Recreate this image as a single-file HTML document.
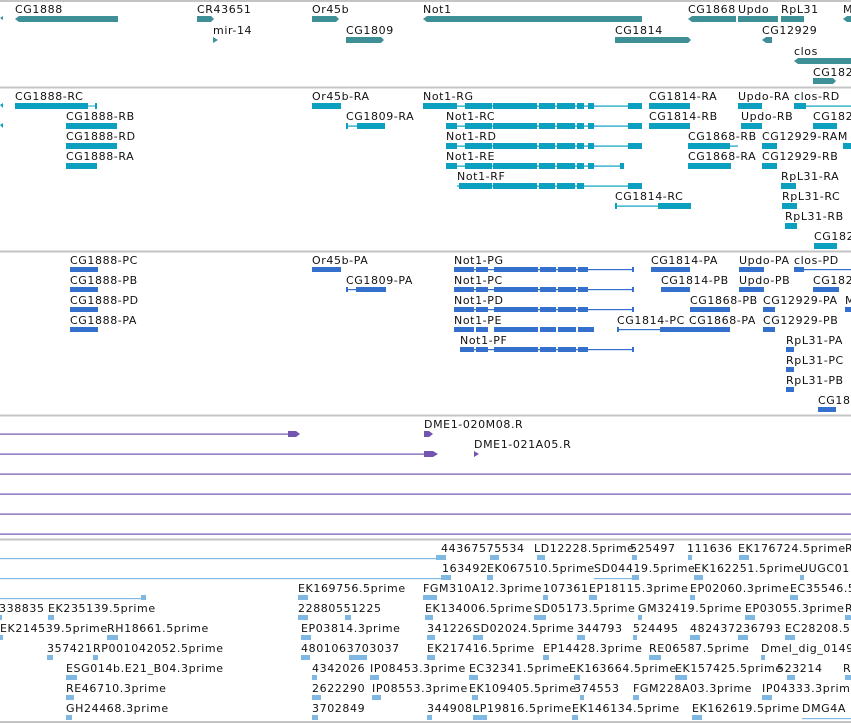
<!DOCTYPE html>
<html><head><meta charset="utf-8"><style>
html,body{margin:0;padding:0;background:#fff;width:851px;height:723px;overflow:hidden}
svg{display:block}
text{font-family:"DejaVu Sans","Liberation Sans",sans-serif;font-size:11px;letter-spacing:0.6px;fill:#111}
</style></head><body>
<svg width="851" height="723" viewBox="0 0 851 723" xmlns="http://www.w3.org/2000/svg">
<g stroke="#c4c4c4" stroke-width="2">
<line x1="0" y1="1" x2="851" y2="1"/><line x1="0" y1="87.5" x2="851" y2="87.5"/>
<line x1="0" y1="251.5" x2="851" y2="251.5"/><line x1="0" y1="415.5" x2="851" y2="415.5"/>
<line x1="0" y1="539.5" x2="851" y2="539.5"/><line x1="0" y1="722" x2="851" y2="722"/>
</g>

<!-- Track 1 genes -->
<g fill="#3f9096">
<polygon points="0,18 3,16 3,20"/>
<polygon points="15,19 19,16 118,16 118,22 19,22"/>
<polygon points="197,16 211,16 214,19 211,22 197,22"/>
<polygon points="312,16 336,16 339,19 336,22 312,22"/>
<polygon points="423,19 427,16 642,16 642,22 427,22"/>
<polygon points="688,19 692,16 736,16 736,22 692,22"/>
<rect x="738" y="16" width="40" height="6"/>
<rect x="781" y="16" width="23" height="6"/>
<polygon points="843,19 847,16 851,16 851,22 847,22"/>
<polygon points="213,37 218,40 213,43"/>
<polygon points="346,37 381,37 384,40 381,43 346,43"/>
<polygon points="615,37 688,37 691,40 688,43 615,43"/>
<polygon points="762,40 766,37 772,37 772,43 766,43"/>
<polygon points="794,61 798,58 851,58 851,64 798,64"/>
<polygon points="813,78 833,78 836,81 833,84 813,84"/>
</g>
<text x="15" y="13">CG1888</text><text x="197" y="13">CR43651</text><text x="312" y="13">Or45b</text>
<text x="423" y="13">Not1</text><text x="688" y="13">CG1868</text><text x="738" y="13">Updo</text>
<text x="781" y="13">RpL31</text><text x="843" y="13">M</text>
<text x="213" y="34">mir-14</text><text x="346" y="34">CG1809</text><text x="615" y="34">CG1814</text><text x="762" y="34">CG12929</text>
<text x="794" y="55">clos</text><text x="813" y="76">CG182</text>

<!-- Track 2 transcripts -->
<g fill="#0ba0c0">
<polygon points="0,105 3,103 3,108"/><polygon points="0,125 3,123 3,128"/>
<rect x="15" y="103" width="73" height="6"/><rect x="87" y="105.5" width="10" height="1"/><rect x="95" y="103" width="2" height="6"/>
<rect x="312" y="103" width="29" height="6"/>
<rect x="423" y="105.5" width="219" height="1.2"/>
<rect x="423" y="103" width="34" height="6"/><rect x="465" y="103" width="27" height="6"/><rect x="493" y="103" width="44" height="6"/><rect x="539" y="103" width="16" height="6"/><rect x="557" y="103" width="18" height="6"/><rect x="577" y="103" width="7" height="6"/><rect x="588" y="103" width="6" height="6"/><rect x="628" y="103" width="14" height="6"/>
<rect x="649" y="103" width="41" height="6"/>
<rect x="738" y="103" width="24" height="6"/>
<rect x="794" y="105.5" width="57" height="1.2"/><rect x="794" y="103" width="12" height="6"/>

<rect x="66" y="123" width="51" height="6"/>
<rect x="346" y="125.5" width="39" height="1.2"/><rect x="346" y="123" width="2" height="6"/><rect x="357" y="123" width="28" height="6"/>
<rect x="446" y="125.5" width="196" height="1.2"/>
<rect x="446" y="123" width="11" height="6"/><rect x="465" y="123" width="27" height="6"/><rect x="493" y="123" width="44" height="6"/><rect x="539" y="123" width="16" height="6"/><rect x="557" y="123" width="18" height="6"/><rect x="577" y="123" width="7" height="6"/><rect x="588" y="123" width="6" height="6"/><rect x="628" y="123" width="14" height="6"/>
<rect x="649" y="123" width="41" height="6"/>
<rect x="741" y="123" width="21" height="6"/>
<rect x="813" y="123" width="24" height="6"/>

<rect x="66" y="143" width="51" height="6"/>
<rect x="446" y="145.5" width="196" height="1.2"/>
<rect x="446" y="143" width="11" height="6"/><rect x="465" y="143" width="27" height="6"/><rect x="493" y="143" width="44" height="6"/><rect x="539" y="143" width="16" height="6"/><rect x="557" y="143" width="18" height="6"/><rect x="577" y="143" width="7" height="6"/><rect x="588" y="143" width="6" height="6"/><rect x="628" y="143" width="14" height="6"/>
<rect x="688" y="145.5" width="50" height="1.2"/><rect x="688" y="143" width="42" height="6"/>
<rect x="762" y="143" width="15" height="6"/><rect x="843" y="143" width="8" height="6"/>

<rect x="66" y="163" width="31" height="6"/>
<rect x="446" y="165.5" width="178" height="1.2"/>
<rect x="446" y="163" width="11" height="6"/><rect x="465" y="163" width="27" height="6"/><rect x="493" y="163" width="44" height="6"/><rect x="539" y="163" width="16" height="6"/><rect x="557" y="163" width="18" height="6"/><rect x="577" y="163" width="7" height="6"/><rect x="588" y="163" width="6" height="6"/><rect x="620" y="163" width="4" height="6"/>
<rect x="688" y="163" width="43" height="6"/>
<rect x="762" y="163" width="15" height="6"/>

<rect x="457" y="185.5" width="185" height="1.2"/>
<rect x="459" y="183" width="33" height="6"/><rect x="493" y="183" width="44" height="6"/><rect x="539" y="183" width="16" height="6"/><rect x="557" y="183" width="18" height="6"/><rect x="577" y="183" width="7" height="6"/><rect x="628" y="183" width="14" height="6"/>
<rect x="781" y="183" width="15" height="6"/>
<rect x="615" y="205.5" width="76" height="1.2"/><rect x="615" y="203" width="2" height="6"/><rect x="658" y="203" width="33" height="6"/>
<rect x="782" y="203" width="15" height="6"/>
<rect x="785" y="223" width="12" height="6"/>
<rect x="814" y="243" width="23" height="6"/>
</g>
<text x="15" y="100">CG1888-RC</text><text x="312" y="100">Or45b-RA</text><text x="423" y="100">Not1-RG</text><text x="649" y="100">CG1814-RA</text><text x="738" y="100">Updo-RA</text><text x="794" y="100">clos-RD</text>
<text x="66" y="120">CG1888-RB</text><text x="346" y="120">CG1809-RA</text><text x="446" y="120">Not1-RC</text><text x="649" y="120">CG1814-RB</text><text x="741" y="120">Updo-RB</text><text x="813" y="120">CG182</text>
<text x="66" y="140">CG1888-RD</text><text x="446" y="140">Not1-RD</text><text x="688" y="140">CG1868-RB</text><text x="762" y="140">CG12929-RAM</text>
<text x="66" y="160">CG1888-RA</text><text x="446" y="160">Not1-RE</text><text x="688" y="160">CG1868-RA</text><text x="762" y="160">CG12929-RB</text>
<text x="457" y="180">Not1-RF</text><text x="781" y="180">RpL31-RA</text>
<text x="615" y="200">CG1814-RC</text><text x="782" y="200">RpL31-RC</text>
<text x="785" y="220">RpL31-RB</text>
<text x="814" y="240">CG182</text>

<!-- Track 3 proteins -->
<g fill="#3470cc">
<rect x="70" y="267" width="28" height="5"/><rect x="312" y="267" width="29" height="5"/>
<rect x="454" y="269" width="180" height="1.2"/><rect x="454" y="267" width="20" height="5"/><rect x="476" y="267" width="12" height="5"/><rect x="494" y="267" width="44" height="5"/><rect x="540" y="267" width="16" height="5"/><rect x="558" y="267" width="18" height="5"/><rect x="578" y="267" width="10" height="5"/><rect x="632" y="267" width="2" height="5"/>
<rect x="651" y="267" width="39" height="5"/><rect x="739" y="267" width="25" height="5"/>
<rect x="794" y="269" width="57" height="1.2"/><rect x="794" y="267" width="10" height="5"/>

<rect x="70" y="287" width="28" height="5"/>
<rect x="346" y="289" width="40" height="1.2"/><rect x="346" y="287" width="2" height="5"/><rect x="356" y="287" width="30" height="5"/>
<rect x="454" y="289" width="180" height="1.2"/><rect x="454" y="287" width="20" height="5"/><rect x="476" y="287" width="12" height="5"/><rect x="494" y="287" width="44" height="5"/><rect x="540" y="287" width="16" height="5"/><rect x="558" y="287" width="18" height="5"/><rect x="578" y="287" width="10" height="5"/><rect x="632" y="287" width="2" height="5"/>
<rect x="661" y="287" width="29" height="5"/><rect x="739" y="287" width="25" height="5"/><rect x="813" y="287" width="26" height="5"/>

<rect x="70" y="307" width="28" height="5"/>
<rect x="454" y="309" width="180" height="1.2"/><rect x="454" y="307" width="20" height="5"/><rect x="476" y="307" width="12" height="5"/><rect x="494" y="307" width="44" height="5"/><rect x="540" y="307" width="16" height="5"/><rect x="558" y="307" width="18" height="5"/><rect x="578" y="307" width="10" height="5"/><rect x="632" y="307" width="2" height="5"/>
<rect x="690" y="307" width="40" height="5"/><rect x="763" y="307" width="12" height="5"/><rect x="845" y="307" width="6" height="5"/>

<rect x="70" y="327" width="28" height="5"/>
<rect x="454" y="327" width="20" height="5"/><rect x="476" y="327" width="12" height="5"/><rect x="494" y="327" width="44" height="5"/><rect x="540" y="327" width="16" height="5"/><rect x="558" y="327" width="18" height="5"/><rect x="578" y="327" width="16" height="5"/>
<rect x="617" y="329" width="73" height="1.2"/><rect x="617" y="327" width="2" height="5"/><rect x="660" y="327" width="70" height="5"/>
<rect x="763" y="327" width="12" height="5"/>

<rect x="460" y="349" width="174" height="1.2"/><rect x="460" y="347" width="14" height="5"/><rect x="476" y="347" width="12" height="5"/><rect x="494" y="347" width="44" height="5"/><rect x="540" y="347" width="16" height="5"/><rect x="558" y="347" width="18" height="5"/><rect x="578" y="347" width="10" height="5"/><rect x="632" y="347" width="2" height="5"/>
<rect x="786" y="347" width="8" height="5"/>
<rect x="786" y="367" width="8" height="5"/>
<rect x="786" y="387" width="8" height="5"/>
<rect x="818" y="407" width="18" height="5"/>
</g>
<text x="70" y="264">CG1888-PC</text><text x="312" y="264">Or45b-PA</text><text x="454" y="264">Not1-PG</text><text x="651" y="264">CG1814-PA</text><text x="739" y="264">Updo-PA</text><text x="794" y="264">clos-PD</text>
<text x="70" y="284">CG1888-PB</text><text x="346" y="284">CG1809-PA</text><text x="454" y="284">Not1-PC</text><text x="661" y="284">CG1814-PB</text><text x="739" y="284">Updo-PB</text><text x="813" y="284">CG182</text>
<text x="70" y="304">CG1888-PD</text><text x="454" y="304">Not1-PD</text><text x="690" y="304">CG1868-PB</text><text x="763" y="304">CG12929-PA</text><text x="845" y="304">M</text>
<text x="70" y="324">CG1888-PA</text><text x="454" y="324">Not1-PE</text><text x="617" y="324">CG1814-PC</text><text x="689" y="324">CG1868-PA</text><text x="763" y="324">CG12929-PB</text>
<text x="460" y="344">Not1-PF</text><text x="786" y="344">RpL31-PA</text>
<text x="786" y="364">RpL31-PC</text><text x="786" y="384">RpL31-PB</text><text x="818" y="404">CG18</text>

<!-- Track 4 -->
<g fill="#7354b0" stroke="none">
<rect x="0" y="433.5" width="290" height="1.2"/><polygon points="288,431 296,431 300,434 296,437 288,437"/>
<polygon points="424,431 429,431 433,434 429,437 424,437"/>
<rect x="0" y="453.5" width="426" height="1.2"/><polygon points="424,451 433,451 438,454 433,457 424,457"/>
<polygon points="474,451 479,454 474,457"/>
<rect x="0" y="473.5" width="851" height="1.2"/><rect x="0" y="493.5" width="851" height="1.2"/>
<rect x="0" y="513.5" width="851" height="1.2"/><rect x="0" y="533.5" width="851" height="1.2"/>
</g>
<text x="424" y="428">DME1-020M08.R</text><text x="474" y="448">DME1-021A05.R</text>

<!-- Track 5 -->
<g fill="#7fb8e2">
<rect x="0" y="558" width="436" height="1.2"/><rect x="436" y="555" width="10" height="5"/>
<rect x="0" y="578" width="441" height="1.2"/><rect x="441" y="575" width="10" height="5"/>
<rect x="0" y="598" width="146" height="1.2"/><rect x="141" y="595" width="5" height="5"/>
<rect x="490" y="555" width="9" height="5"/><rect x="537" y="555" width="8" height="5"/><rect x="632" y="555" width="5" height="5"/><rect x="688" y="555" width="4" height="5"/><rect x="739" y="555" width="10" height="5"/>
<rect x="487" y="575" width="6" height="5"/><rect x="594" y="578" width="45" height="1.2"/><rect x="632" y="575" width="7" height="5"/><rect x="694" y="575" width="9" height="5"/><rect x="800" y="575" width="4" height="5"/>
<rect x="298" y="595" width="10" height="5"/><rect x="423" y="595" width="14" height="5"/><rect x="543" y="595" width="5" height="5"/><rect x="589" y="595" width="8" height="5"/><rect x="690" y="595" width="5" height="5"/><rect x="790" y="595" width="8" height="5"/>
<rect x="0" y="615" width="2" height="5"/><rect x="48" y="615" width="6" height="5"/><rect x="298" y="615" width="10" height="5"/><rect x="345" y="615" width="6" height="5"/><rect x="425" y="615" width="8" height="5"/><rect x="534" y="615" width="12" height="5"/><rect x="638" y="615" width="4" height="5"/><rect x="745" y="615" width="10" height="5"/><rect x="845" y="615" width="6" height="5"/>
<rect x="0" y="635" width="3" height="5"/><rect x="107" y="635" width="11" height="5"/><rect x="301" y="635" width="10" height="5"/><rect x="427" y="635" width="8" height="5"/><rect x="473" y="635" width="10" height="5"/><rect x="577" y="635" width="8" height="5"/><rect x="633" y="635" width="4" height="5"/><rect x="690" y="635" width="10" height="5"/><rect x="738" y="635" width="10" height="5"/><rect x="785" y="635" width="10" height="5"/>
<rect x="47" y="655" width="6" height="5"/><rect x="93" y="655" width="5" height="5"/><rect x="301" y="655" width="9" height="5"/><rect x="349" y="655" width="18" height="5"/><rect x="427" y="655" width="8" height="5"/><rect x="543" y="655" width="6" height="5"/><rect x="649" y="655" width="12" height="5"/><rect x="761" y="655" width="4" height="5"/>
<rect x="66" y="675" width="11" height="5"/><rect x="312" y="675" width="5" height="5"/><rect x="370" y="675" width="9" height="5"/><rect x="469" y="675" width="9" height="5"/><rect x="574" y="675" width="6" height="5"/><rect x="675" y="675" width="12" height="5"/><rect x="787" y="675" width="8" height="5"/><rect x="845" y="675" width="6" height="5"/>
<rect x="66" y="695" width="8" height="5"/><rect x="312" y="695" width="9" height="5"/><rect x="372" y="695" width="9" height="5"/><rect x="472" y="695" width="6" height="5"/><rect x="580" y="695" width="4" height="5"/><rect x="633" y="695" width="6" height="5"/><rect x="762" y="695" width="10" height="5"/>
<rect x="66" y="715" width="6" height="5"/><rect x="312" y="715" width="6" height="5"/><rect x="427" y="715" width="5" height="5"/><rect x="473" y="715" width="14" height="5"/><rect x="572" y="715" width="6" height="5"/><rect x="692" y="715" width="10" height="5"/><rect x="802" y="718" width="49" height="1.2"/>
</g>
<text x="441" y="552">44367575534</text><text x="534" y="552">LD12228.5prime</text><text x="630" y="552">525497</text><text x="687" y="552">111636</text><text x="738" y="552">EK176724.5prime</text><text x="845" y="552">R</text>
<text x="442" y="572">163492</text><text x="487" y="572">EK067510.5prime</text><text x="594" y="572">SD04419.5prime</text><text x="694" y="572">EK162251.5prime</text><text x="800" y="572">UUGC01</text>
<text x="298" y="592">EK169756.5prime</text><text x="423" y="592">FGM310A12.3prime</text><text x="543" y="592">107361</text><text x="589" y="592">EP18115.3prime</text><text x="690" y="592">EP02060.3prime</text><text x="790" y="592">EC35546.5</text>
<text x="-1" y="612">338835</text><text x="48" y="612">EK235139.5prime</text><text x="298" y="612">22880551225</text><text x="425" y="612">EK134006.5prime</text><text x="534" y="612">SD05173.5prime</text><text x="638" y="612">GM32419.5prime</text><text x="745" y="612">EP03055.3prime</text><text x="845" y="612">R</text>
<text x="0" y="632">EK214539.5prime</text><text x="107" y="632">RH18661.5prime</text><text x="301" y="632">EP03814.3prime</text><text x="427" y="632">341226</text><text x="473" y="632">SD02024.5prime</text><text x="577" y="632">344793</text><text x="633" y="632">524495</text><text x="690" y="632">482437236793</text><text x="785" y="632">EC28208.5</text>
<text x="47" y="652">357421</text><text x="93" y="652">RP001042052.5prime</text><text x="301" y="652">4801063703037</text><text x="427" y="652">EK217416.5prime</text><text x="543" y="652">EP14428.3prime</text><text x="649" y="652">RE06587.5prime</text><text x="761" y="652">Dmel_dig_0149</text>
<text x="66" y="672">ESG014b.E21_B04.3prime</text><text x="312" y="672">4342026</text><text x="370" y="672">IP08453.3prime</text><text x="469" y="672">EC32341.5prime</text><text x="569" y="672">EK163664.5prime</text><text x="675" y="672">EK157425.5prime</text><text x="777" y="672">523214</text><text x="843" y="672">R</text>
<text x="66" y="692">RE46710.3prime</text><text x="312" y="692">2622290</text><text x="372" y="692">IP08553.3prime</text><text x="469" y="692">EK109405.5prime</text><text x="574" y="692">374553</text><text x="633" y="692">FGM228A03.3prime</text><text x="762" y="692">IP04333.3prim</text>
<text x="66" y="712">GH24468.3prime</text><text x="312" y="712">3702849</text><text x="427" y="712">344908</text><text x="473" y="712">LP19816.5prime</text><text x="572" y="712">EK146134.5prime</text><text x="692" y="712">EK162619.5prime</text><text x="802" y="712">DMG4A</text>
</svg>
</body></html>
